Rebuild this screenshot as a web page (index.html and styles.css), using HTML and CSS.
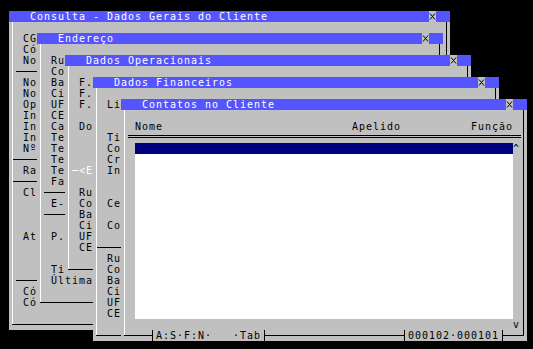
FILE: index.html
```html
<!DOCTYPE html>
<html lang="pt">
  <head>
    <meta charset="UTF-8" />
    <title>Consulta - Dados Gerais do Cliente</title>
    <link rel="stylesheet" href="styles.css">
  </head>
  <body>
    <div class="desk">
      <!-- janela 1: dados gerais (só a borda esquerda aparece) -->
      <div class="win w1">
        <div class="bar">
          <span class="cap">Consulta - Dados Gerais do Cliente</span>
          <span class="x"><svg width="7" height="11" viewBox="0 0 7 11"><path d="M1 2.5l5 6M6 2.5l-5 6" stroke="#000" /></svg></span>
        </div>
        <div class="frame">
          <div class="ln"></div>
          <div class="ln">CG</div>
          <div class="ln">Có</div>
          <div class="ln">No</div>
          <div class="ln sep gap"></div>
          <div class="ln">No</div>
          <div class="ln">No</div>
          <div class="ln">Op</div>
          <div class="ln">In</div>
          <div class="ln">In</div>
          <div class="ln">In</div>
          <div class="ln">Nº</div>
          <div class="ln sep"></div>
          <div class="ln">Ra</div>
          <div class="ln sep"></div>
          <div class="ln">Cl</div>
          <div class="ln"></div>
          <div class="ln"></div>
          <div class="ln"></div>
          <div class="ln">At</div>
          <div class="ln"></div>
          <div class="ln"></div>
          <div class="ln"></div>
          <div class="ln sep gap"></div>
          <div class="ln">Có</div>
          <div class="ln">Có</div>
        </div>
      </div>

      <!-- janela 2: endereço -->
      <div class="win w2">
        <div class="bar">
          <span class="cap">Endereço</span>
          <span class="x"><svg width="7" height="11" viewBox="0 0 7 11"><path d="M1 2.5l5 6M6 2.5l-5 6" stroke="#000" /></svg></span>
        </div>
        <div class="frame">
          <div class="ln"></div>
          <div class="ln">Ru</div>
          <div class="ln">Co</div>
          <div class="ln">Ba</div>
          <div class="ln">Ci</div>
          <div class="ln">UF</div>
          <div class="ln">CE</div>
          <div class="ln">Ca</div>
          <div class="ln">Te</div>
          <div class="ln">Te</div>
          <div class="ln">Te</div>
          <div class="ln">Te</div>
          <div class="ln">Fa</div>
          <div class="ln sep gap"></div>
          <div class="ln">E-</div>
          <div class="ln sep gap"></div>
          <div class="ln"></div>
          <div class="ln">P.</div>
          <div class="ln"></div>
          <div class="ln"></div>
          <div class="ln">Ti</div>
          <div class="ln">Última</div>
        </div>
      </div>

      <!-- janela 3: dados operacionais -->
      <div class="win w3">
        <div class="bar">
          <span class="cap">Dados Operacionais</span>
          <span class="x"><svg width="7" height="11" viewBox="0 0 7 11"><path d="M1 2.5l5 6M6 2.5l-5 6" stroke="#000" /></svg></span>
        </div>
        <div class="frame">
          <div class="ln"></div>
          <div class="ln">F.</div>
          <div class="ln">F.</div>
          <div class="ln">F.</div>
          <div class="ln"></div>
          <div class="ln">Do</div>
          <div class="ln"></div>
          <div class="ln"></div>
          <div class="ln"></div>
          <div class="ln tab">&lt;E</div>
          <div class="ln"></div>
          <div class="ln">Ru</div>
          <div class="ln">Co</div>
          <div class="ln">Ba</div>
          <div class="ln">Ci</div>
          <div class="ln">UF</div>
          <div class="ln">CE</div>
        </div>
      </div>

      <!-- janela 4: dados financeiros -->
      <div class="win w4">
        <div class="bar">
          <span class="cap">Dados Financeiros</span>
          <span class="x"><svg width="7" height="11" viewBox="0 0 7 11"><path d="M1 2.5l5 6M6 2.5l-5 6" stroke="#000" /></svg></span>
        </div>
        <div class="frame">
          <div class="ln"></div>
          <div class="ln">Li</div>
          <div class="ln"></div>
          <div class="ln"></div>
          <div class="ln">Ti</div>
          <div class="ln">Co</div>
          <div class="ln">Cr</div>
          <div class="ln">In</div>
          <div class="ln"></div>
          <div class="ln"></div>
          <div class="ln">Ce</div>
          <div class="ln"></div>
          <div class="ln">Co</div>
          <div class="ln"></div>
          <div class="ln sep"></div>
          <div class="ln">Ru</div>
          <div class="ln">Co</div>
          <div class="ln">Ba</div>
          <div class="ln">Ci</div>
          <div class="ln">UF</div>
          <div class="ln">CE</div>
        </div>
      </div>

      <!-- janela 5: contatos -->
      <div class="win w5">
        <div class="bar">
          <span class="cap">Contatos no Cliente</span>
          <span class="x"><svg width="7" height="11" viewBox="0 0 7 11"><path d="M1 2.5l5 6M6 2.5l-5 6" stroke="#000" /></svg></span>
        </div>
        <div class="frame">
          <div class="ln"></div>
          <div class="ln cols">
            <span>Nome</span>
            <span>Apelido</span>
            <span>Função</span>
          </div>
          <div class="ln dbl"></div>
          <div class="rows">
            <div class="list">
              <div class="sel"></div>
            </div>
            <div class="scroll">
              <span>^</span>
              <span>v</span>
            </div>
          </div>
          <div class="foot">
            <span class="tag">A:S·F:N·   ·Tab</span>
            <span class="tag num">000102·000101</span>
          </div>
        </div>
      </div>
    </div>
  </body>
</html>
```

FILE: styles.css
```css
html,
body {
  margin: 0;
  background: #000;
}
.desk {
  position: relative;
  width: 533px;
  height: 349px;
  overflow: hidden;
  font-family: "DejaVu Sans Mono", monospace;
  font-size: 10px;
  line-height: 11px;
  letter-spacing: 0.98px;
  color: #000;
}

/* windows sit on the text grid: col = 7px, row = 11px */
.win {
  position: absolute;
  display: flex;
  flex-direction: column;
}
.w1 {
  left: 9px;
  top: 11px;
  width: 441px;
  height: 319px;
}
.w2 {
  left: 37px;
  top: 33px;
  width: 406px;
  height: 275px;
}
.w3 {
  left: 65px;
  top: 55px;
  width: 406px;
  height: 220px;
}
.w4 {
  left: 93px;
  top: 77px;
  width: 406px;
  height: 264px;
}
.w5 {
  left: 121px;
  top: 99px;
  width: 406px;
  height: 242px;
}

.bar {
  display: flex;
  height: 11px;
  padding: 0 14px 0 21px;
  background: #5555ff;
  color: #fff;
  white-space: pre;
}
.cap {
  flex: 1;
}
.x {
  width: 7px;
  height: 11px;
  background: #c0c0c0;
}
.x svg {
  display: block;
}

.frame {
  flex: 1;
  background:
    linear-gradient(#fff, #fff) left 3px top 0 / 1px calc(100% - 6px) no-repeat,
    linear-gradient(#000, #000) right 3px top 0 / 1px calc(100% - 5px) no-repeat,
    linear-gradient(#000, #000) left 3px bottom 5px / calc(100% - 6px) 1px no-repeat,
    #c0c0c0;
}
.ln {
  height: 11px;
  padding-left: 14px;
  white-space: pre;
}
.sep {
  background: linear-gradient(#000, #000) 4px 5px / calc(100% - 7px) 1px no-repeat;
}
.sep.gap {
  background-position: 7px 5px;
}
.tab {
  color: #fff;
  background: linear-gradient(#fff, #fff) 7px 5px / 6px 1px no-repeat;
}

/* contatos */
.cols {
  display: grid;
  grid-template-columns: 217px 119px 1fr;
}
.dbl {
  background:
    linear-gradient(#000, #000) 7px 3px / 393px 1px no-repeat,
    linear-gradient(#000, #000) 7px 5px / 393px 1px no-repeat;
}
.rows {
  display: flex;
  height: 187px;
}
.list {
  width: 378px;
  height: 176px;
  margin-left: 14px;
  background: #fff;
}
.sel {
  height: 11px;
  background: #000080;
}
.scroll {
  display: flex;
  flex-direction: column;
  justify-content: space-between;
  width: 7px;
}
.foot {
  display: flex;
  height: 11px;
}
.tag {
  margin-left: 31px;
  padding: 0 3px;
  border-left: 1px solid #000;
  border-right: 1px solid #000;
  background: #c0c0c0;
  white-space: pre;
}
.tag.num {
  margin-left: 139px;
}
```
